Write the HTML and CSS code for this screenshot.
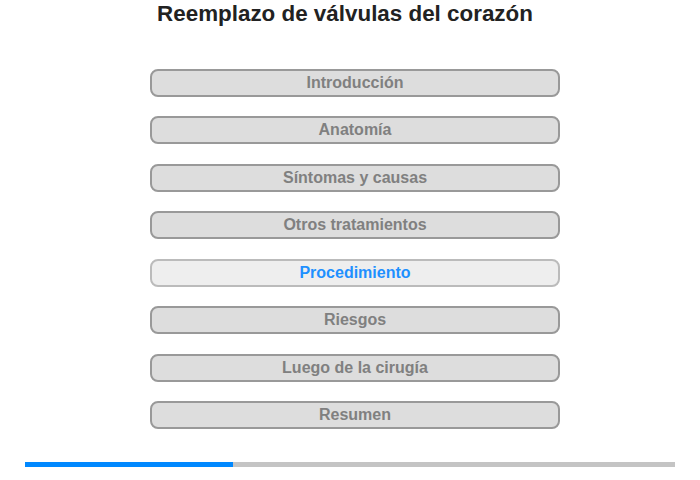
FILE: index.html
```
<!DOCTYPE html>
<html>
<head>
<meta charset="utf-8">
<link rel="stylesheet" href="styles.css">
</head>
<body>
<div class="page">
  <h1 class="title">Reemplazo de válvulas del corazón</h1>
  <nav class="menu">
    <div class="item">Introducción</div>
    <div class="item">Anatomía</div>
    <div class="item">Síntomas y causas</div>
    <div class="item">Otros tratamientos</div>
    <div class="item active">Procedimiento</div>
    <div class="item">Riesgos</div>
    <div class="item">Luego de la cirugía</div>
    <div class="item">Resumen</div>
  </nav>
  <div class="progress"><div class="bar" style="width:32%"></div></div>
</div>
</body>
</html>
```
FILE: styles.css
```
html, body { margin: 0; padding: 0; background: #fff; }
body { font-family: "Liberation Sans", Arial, sans-serif; width: 700px; height: 480px; overflow: hidden; }
.page { display: flex; flex-direction: column; }
.title { margin: 1px 0 0 0; width: 690px; text-align: center; font-size: 22.4px; font-weight: bold; color: #222; line-height: 26px; }
.menu { margin: 41.5px 0 0 150px; display: flex; flex-direction: column; gap: 19.5px; }
.item {
  box-sizing: border-box; width: 410px; height: 28px;
  border: 2px solid #999; border-radius: 8px; background: #ddd;
  color: #808080; font-weight: bold; font-size: 16px;
  display: flex; align-items: center; justify-content: center;
}
.item.active { background: #eee; border-color: #bbb; color: #1e90ff; }
.progress { margin: 32.5px 0 0 25px; width: 650px; height: 5px; background: #c4c4c4; }
.bar { height: 100%; background: #0088ff; }
```
